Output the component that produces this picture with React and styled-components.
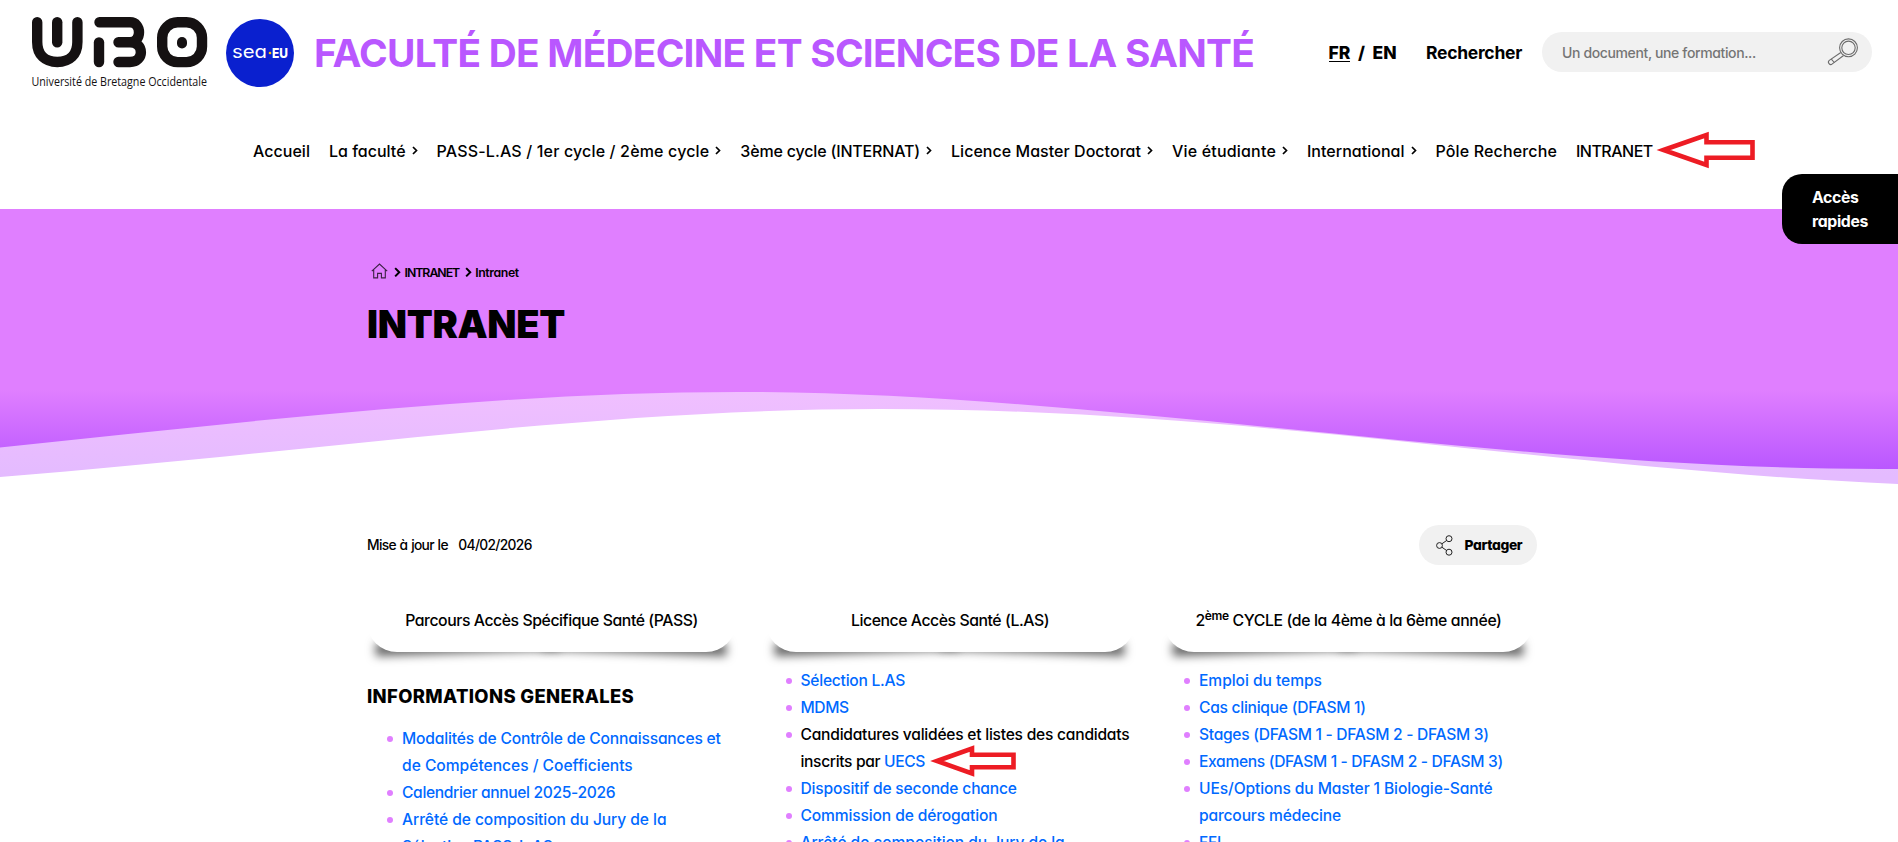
import React from "react";
import styled, { createGlobalStyle } from "styled-components";

const GlobalStyle = createGlobalStyle`
  * {
    box-sizing: border-box;
  }
  body {
    margin: 0;
    height: 842px;
    overflow: hidden;
    background: #fff;
    color: #000;
    font-family: Inter, "Liberation Sans", sans-serif;
    font-feature-settings: "cv11";
    font-weight: 500;
  }
  a {
    color: inherit;
    text-decoration: none;
  }
`;

const Page = styled.div`
  position: relative;
  height: 842px;
  overflow: hidden;
`;

const TopBar = styled.header`
  height: 104px;
  padding: 0 26px 0 31px;
  display: flex;
  align-items: center;
`;

const Brand = styled.div`
  padding-top: 2px;
  display: flex;
  align-items: center;
  gap: 18px;
  svg {
    display: block;
    overflow: visible;
  }
`;

const SiteTitle = styled.div`
  margin-left: 20px;
  color: #b957ff;
  font-size: 38.8px;
  font-weight: 700;
  letter-spacing: -0.745px;
  white-space: nowrap;
`;

const Tools = styled.div`
  margin-left: auto;
  display: flex;
  align-items: center;
`;

const Languages = styled.div`
  margin-right: 29.5px;
  padding-top: 2px;
  display: flex;
  gap: 7.5px;
  font-size: 17.5px;
  font-weight: 800;
`;

const Language = styled.a`
  border-bottom: 1px solid ${(props) => (props.$current ? "#000" : "transparent")};
  line-height: 17px;
`;

const SearchLabel = styled.label`
  margin-right: 20px;
  font-size: 17.5px;
  font-weight: 700;
  letter-spacing: -0.28px;
`;

const SearchBox = styled.div`
  width: 330px;
  height: 40px;
  padding: 0 13px 0 20px;
  border-radius: 20px;
  background: #f1f1f1;
  color: #757575;
  font-size: 14px;
  letter-spacing: -0.37px;
  display: flex;
  align-items: center;
  justify-content: space-between;
`;

const Nav = styled.nav`
  height: 105px;
  padding: 0 0 12px 253px;
  display: flex;
  align-items: center;
  gap: 19px;
  font-size: 16px;
`;

const NavItem = styled.a`
  position: relative;
  display: flex;
  align-items: center;
  gap: 6px;
  white-space: nowrap;
  letter-spacing: ${(props) => props.$spacing}px;
`;

const Arrow = styled.svg`
  position: absolute;
  left: ${(props) => props.$left}px;
  top: ${(props) => props.$top}px;
`;

const QuickAccess = styled.aside`
  position: absolute;
  top: 174px;
  right: 0;
  width: 116px;
  height: 70px;
  padding: 12px 0 0 30px;
  border-radius: 20px 0 0 20px;
  background: #000;
  color: #fff;
  font-size: 15.8px;
  font-weight: 700;
  line-height: 24px;
  letter-spacing: -0.35px;
  z-index: 2;
`;

const Hero = styled.section`
  position: relative;
  height: 281px;
  padding: 53px 0 0 367px;
  background: linear-gradient(#e07fff 181px, #b957ff 261px);
`;

const Wave = styled.svg`
  position: absolute;
  left: 0;
  bottom: 0;
`;

const Breadcrumb = styled.div`
  height: 20px;
  display: flex;
  align-items: center;
  font-size: 12.3px;
  font-weight: 600;
  > svg:first-child {
    margin: -3px 6px 0 4px;
  }
`;

const Crumb = styled.span`
  margin: 0 5.5px 0 3.5px;
  letter-spacing: ${(props) => props.$spacing}px;
`;

const PageTitle = styled.h1`
  margin: 19px 0 0;
  font-size: 38px;
  line-height: 46px;
  font-weight: 900;
  letter-spacing: -0.33px;
`;

const Content = styled.main`
  width: 1170px;
  margin: 35px 0 0 367px;
`;

const MetaRow = styled.div`
  height: 40px;
  display: flex;
  align-items: center;
  justify-content: space-between;
  font-size: 13.8px;
`;

const Updated = styled.div`
  display: flex;
  gap: 10.5px;
  letter-spacing: -0.7px;
  span {
    word-spacing: 0.8px;
  }
  span + span {
    letter-spacing: -0.68px;
  }
`;

const ShareButton = styled.button`
  width: 118px;
  height: 40px;
  padding: 0 0 0 17px;
  border: 0;
  border-radius: 20px;
  background: #f1f1f1;
  display: flex;
  align-items: center;
  gap: 11.5px;
  font: inherit;
  font-weight: 800;
  letter-spacing: -0.35px;
`;

const Columns = styled.div`
  margin-top: 24px;
  display: grid;
  grid-template-columns: repeat(3, 369px);
  gap: 29.5px;
`;

/* sheet lifted at both bottom corners */
const CardTitle = styled.div`
  position: relative;
  z-index: 0;
  height: 63px;
  font-size: 15.8px;
  letter-spacing: ${(props) => props.$spacing}px;
  text-align: center;
  sup {
    font-size: 12px;
    line-height: 0;
    font-weight: 600;
    vertical-align: 6px;
  }
  &::before,
  &::after {
    content: "";
    position: absolute;
    z-index: -2;
    bottom: 14.5px;
    left: 8px;
    width: 50%;
    height: 20%;
    box-shadow: 0 15px 10px #666;
    transform: rotate(-2deg);
  }
  &::after {
    left: auto;
    right: 10px;
    transform: rotate(2deg);
  }
`;

const CardFace = styled.div`
  height: 63px;
  padding-top: 18px;
  border-radius: 0 0 30px 30px;
  background: #fff;
  line-height: 27px;
`;

const SectionTitle = styled.h3`
  margin: 31px 0 0;
  font-size: 18.4px;
  line-height: 27px;
  font-weight: 800;
  letter-spacing: 0.37px;
`;

const LinkList = styled.ul`
  margin: 15px 0 0;
  padding: 0 0 0 20px;
  list-style: none;
  font-size: 15.6px;
  line-height: 27px;
`;

const ListItem = styled.li`
  display: flex;
  gap: 9px;
  &::before {
    content: "";
    flex: none;
    width: 6px;
    height: 6px;
    margin-top: 10.5px;
    border-radius: 50%;
    background: #e07fff;
  }
`;

const Line = styled.span`
  display: block;
  position: relative;
  white-space: nowrap;
  color: ${(props) => (props.$plain ? "#000" : "#0069ff")};
  letter-spacing: ${(props) => props.$spacing}px;
`;

const BlueLink = styled.a`
  color: #0069ff;
`;

const menu = [
  { label: "Accueil", spacing: 0.03 },
  { label: "La faculté", spacing: 0, more: true },
  { label: "PASS-L.AS / 1er cycle / 2ème cycle", spacing: 0.16, more: true },
  { label: "3ème cycle (INTERNAT)", spacing: -0.18, more: true },
  { label: "Licence Master Doctorat", spacing: 0.04, more: true },
  { label: "Vie étudiante", spacing: 0.18, more: true },
  { label: "International", spacing: 0.02, more: true },
  { label: "Pôle Recherche", spacing: 0.14 },
  { label: "INTRANET", spacing: -0.5, marked: true },
];

const passLinks = [
  [["Modalités de Contrôle de Connaissances et", -0.17], ["de Compétences / Coefficients", -0.01]],
  [["Calendrier annuel 2025-2026", -0.345]],
  [["Arrêté de composition du Jury de la", -0.07], ["Sélection PASS-L.AS", -0.25]],
];

const cycleLinks = [
  [["Emploi du temps", -0.05]],
  [["Cas clinique (DFASM 1)", -0.27]],
  [["Stages (DFASM 1 - DFASM 2 - DFASM 3)", -0.29]],
  [["Examens (DFASM 1 - DFASM 2 - DFASM 3)", -0.335]],
  [["UEs/Options du Master 1 Biologie-Santé", -0.12], ["parcours médecine", -0.16]],
  [["FFI", -0.2]],
];

function UboLogo() {
  return (
    <svg width="177" height="76" viewBox="31 15 177 76">
      <g fill="none" stroke="#151112" strokeWidth="10.4" strokeLinecap="round" strokeLinejoin="round">
        <path d="M37.2 22.3V42c0 13 8 20 20.1 20s20.1-7 20.1-20V22.3" />
        <path d="M57.2 22.3v20" />
        <path d="M99 42.5V62" />
        <path d="M99.5 22.3H130c12 0 12 20 0 20H118.5M130 42.3c14.5 0 14.5 19.7 0 19.7H118.5" />
        <rect x="162.2" y="22.3" width="39.8" height="39.8" rx="15.5" />
      </g>
      <rect x="177" y="37" width="10" height="11.5" rx="5" fill="#151112" />
      <text
        x="31.5"
        y="86"
        fontSize="12.5"
        fontFamily="Open Sans, sans-serif"
        fontWeight="400"
        fill="#151112"
        textLength="175.5"
        lengthAdjust="spacingAndGlyphs"
      >
        Université de Bretagne Occidentale
      </text>
    </svg>
  );
}

function SeaLogo() {
  return (
    <svg width="68" height="70" viewBox="0 0 68 70">
      <circle cx="34" cy="35" r="34" fill="#0a20cf" />
      <text x="6" y="40" fontSize="18" fontFamily="Inter" fontWeight="400" fill="#fff" textLength="35" lengthAdjust="spacingAndGlyphs">
        sea
      </text>
      <circle cx="44" cy="35" r="1.3" fill="#ffc400" />
      <text x="46" y="40" fontSize="13.5" fontFamily="Inter" fontWeight="800" fill="#fff" textLength="16" lengthAdjust="spacingAndGlyphs">
        EU
      </text>
    </svg>
  );
}

function Magnifier() {
  return (
    <svg width="32" height="28" viewBox="0 0 32 28" fill="none" stroke="#6b6b6b" strokeWidth="1.1">
      <circle cx="21.5" cy="9.8" r="8.9" />
      <circle cx="21.5" cy="9.8" r="6.7" />
      <path d="M13.8 14.5L2.3 22.4a2.3 2.3 0 0 0 3 3.5L16.6 17.5" />
      <path d="M4.3 21.1l3 3.4" />
    </svg>
  );
}

function Chevron({ size = 6 }) {
  return (
    <svg width={size} height={size * 1.5} viewBox="0 0 6 9" fill="none" stroke="#000" strokeWidth="1.7">
      <path d="M1 1l3.5 3.5L1 8" />
    </svg>
  );
}

function HomeIcon() {
  return (
    <svg width="17" height="16" viewBox="0 0 17 16" fill="none" stroke="#3a2142" strokeWidth="1.1">
      <path d="M0.8 8.2L8.5 1l7.7 7.2M2.7 6.7v8.2h3.9v-4.5h3.8v4.5h3.9V6.7" />
    </svg>
  );
}

function ShareIcon() {
  return (
    <svg width="17" height="21" viewBox="0 0 17 21" fill="none" stroke="#222" strokeWidth="1">
      <circle cx="3.5" cy="10.5" r="2.9" />
      <circle cx="13" cy="3.7" r="3" />
      <circle cx="13" cy="17.2" r="3" />
      <path d="M5.9 8.8l4.7-3.3M5.9 12.2l4.7 3.3" />
    </svg>
  );
}

function Links({ items }) {
  return items.map((lines) => (
    <ListItem key={lines[0][0]}>
      <a href="#">
        {lines.map(([text, spacing]) => (
          <Line key={text} $spacing={spacing}>{text}</Line>
        ))}
      </a>
    </ListItem>
  ));
}

export default function App() {
  return (
    <Page>
      <GlobalStyle />
      <TopBar>
        <Brand>
          <UboLogo />
          <SeaLogo />
        </Brand>
        <SiteTitle>FACULTÉ DE MÉDECINE ET SCIENCES DE LA SANTÉ</SiteTitle>
        <Tools>
          <Languages>
            <Language $current>FR</Language>
            <Language as="span">/</Language>
            <Language>EN</Language>
          </Languages>
          <SearchLabel>Rechercher</SearchLabel>
          <SearchBox>
            <span>Un document, une formation...</span>
            <Magnifier />
          </SearchBox>
        </Tools>
      </TopBar>

      <Nav>
        {menu.map((item) => (
          <NavItem key={item.label} $spacing={item.spacing}>
            {item.label}
            {item.more && <Chevron />}
            {item.marked && (
              <Arrow $left={79.5} $top={-10} width="102" height="38" viewBox="0 0 102 38">
                <path d="M8.5 19L51.5 4v7.3H97.5v15.5H51.5V34z" fill="#fff" stroke="#ed1c24" strokeWidth="4.6" />
              </Arrow>
            )}
          </NavItem>
        ))}
      </Nav>

      <QuickAccess>
        Accès
        <br />
        rapides
      </QuickAccess>

      <Hero>
        <Wave width="1898" height="110" viewBox="0 380 1898 110">
          <defs>
            <linearGradient id="haze" gradientUnits="userSpaceOnUse" x1="0" y1="392" x2="0" y2="475">
              <stop offset="0" stopColor="#f0bfff" />
              <stop offset="1" stopColor="#e4bbff" />
            </linearGradient>
          </defs>
          <path d="M0 447.5C250 421.5 500 392 739 392C1100 392 1500 469 1880 469H1898V490H0z" fill="url(#haze)" />
          <path d="M0 477C320 452 590 409 880 409C1250 409 1540 468 1898 484V490H0z" fill="#fff" />
        </Wave>
        <Breadcrumb>
          <HomeIcon />
          <Chevron size={7} />
          <Crumb $spacing={-1}>INTRANET</Crumb>
          <Chevron size={7} />
          <Crumb $spacing={-0.4}>Intranet</Crumb>
        </Breadcrumb>
        <PageTitle>INTRANET</PageTitle>
      </Hero>

      <Content>
        <MetaRow>
          <Updated>
            <span>Mise à jour le</span>
            <span>04/02/2026</span>
          </Updated>
          <ShareButton>
            <ShareIcon />
            Partager
          </ShareButton>
        </MetaRow>

        <Columns>
          <section>
            <CardTitle $spacing={-0.44}>
              <CardFace>Parcours Accès Spécifique Santé (PASS)</CardFace>
            </CardTitle>
            <SectionTitle>INFORMATIONS GENERALES</SectionTitle>
            <LinkList>
              <Links items={passLinks} />
            </LinkList>
          </section>
          <section>
            <CardTitle $spacing={-0.447}>
              <CardFace>Licence Accès Santé (L.AS)</CardFace>
            </CardTitle>
            <LinkList>
              <Links items={[[["Sélection L.AS", -0.25]], [["MDMS", -0.4]]]} />
              <ListItem>
                <div>
                  <Line $plain $spacing={-0.24}>Candidatures validées et listes des candidats</Line>
                  <Line $plain $spacing={-0.35}>
                    inscrits par <BlueLink href="#">UECS</BlueLink>
                    <Arrow $left={128} $top={-3} width="90" height="32" viewBox="0 0 90 32">
                      <path d="M8 16L43 3.5v6.3h41.5v12.5H43v6.2z" fill="#fff" stroke="#ed1c24" strokeWidth="4.6" />
                    </Arrow>
                  </Line>
                </div>
              </ListItem>
              <Links
                items={[
                  [["Dispositif de seconde chance", -0.17]],
                  [["Commission de dérogation", -0.14]],
                  [["Arrêté de composition du Jury de la", -0.08]],
                ]}
              />
            </LinkList>
          </section>
          <section>
            <CardTitle $spacing={-0.38}>
              <CardFace>
                2<sup>ème</sup> CYCLE (de la 4ème à la 6ème année)
              </CardFace>
            </CardTitle>
            <LinkList>
              <Links items={cycleLinks} />
            </LinkList>
          </section>
        </Columns>
      </Content>
    </Page>
  );
}
